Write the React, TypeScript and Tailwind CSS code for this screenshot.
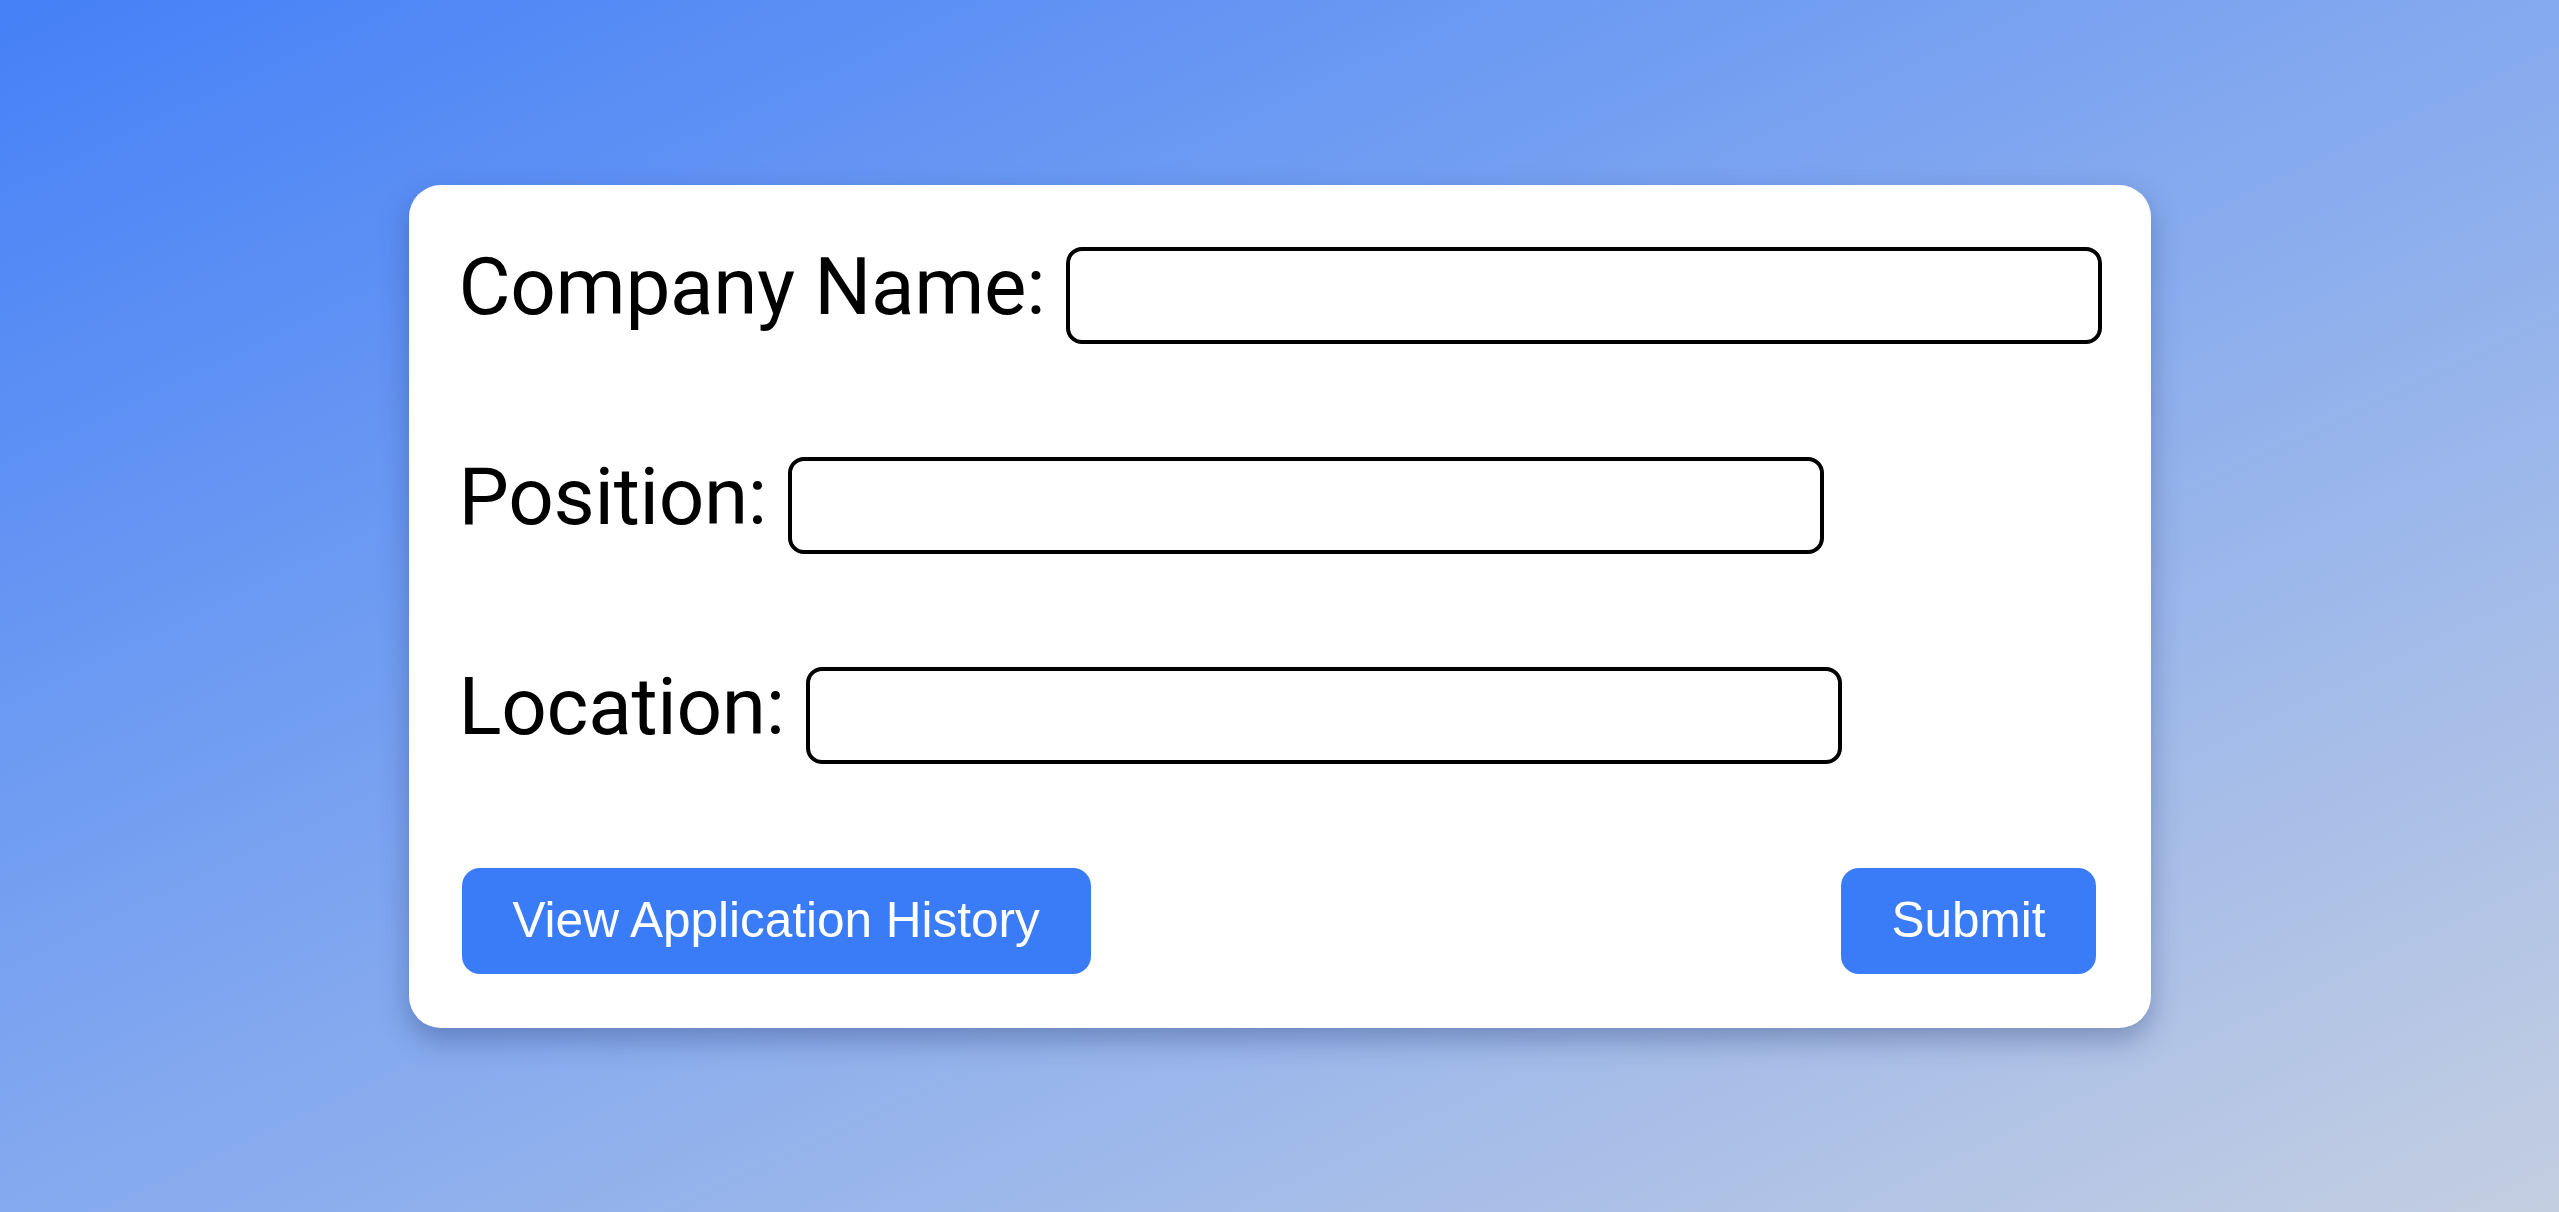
import React from "react";

export default function App() {
  const rows = [
    { label: "Company Name:" },
    { label: "Position:" },
    { label: "Location:" },
  ];
  return (
    <div className="w-full h-[1212px] bg-gradient-to-br from-[#4580f7] to-[#c4cee1] flex items-center justify-center">
      <div className="w-[1742px] h-[843px] shrink-0 bg-white rounded-[32px] shadow-[0_12px_28px_rgba(30,50,110,0.35)] pt-[62px] pb-[54px] pl-[50px] pr-[48px] flex flex-col">
        <div className="flex flex-col gap-[113px]">
          {rows.map((r) => (
            <div key={r.label} className="flex items-start">
              <label className="whitespace-nowrap shrink-0 text-[80px] leading-none text-black font-['Roboto',sans-serif] tracking-[-0.3px]">
                {r.label}
              </label>
              <input
                type="text"
                className="shrink-0 ml-[21px] w-[1036px] h-[97px] border-[4px] border-black rounded-[16px] bg-white outline-none"
              />
            </div>
          ))}
        </div>
        <div className="mt-[104px] flex items-center justify-between pl-[3px] pr-[7px]">
          <button className="h-[106px] px-[51px] rounded-[18px] bg-[#3a7cf7] text-white text-[49.5px] whitespace-nowrap font-['Liberation_Sans',Arial,sans-serif]">
            View Application History
          </button>
          <button className="h-[106px] px-[50px] rounded-[18px] bg-[#3a7cf7] text-white text-[49.5px] whitespace-nowrap font-['Liberation_Sans',Arial,sans-serif]">
            Submit
          </button>
        </div>
      </div>
    </div>
  );
}
